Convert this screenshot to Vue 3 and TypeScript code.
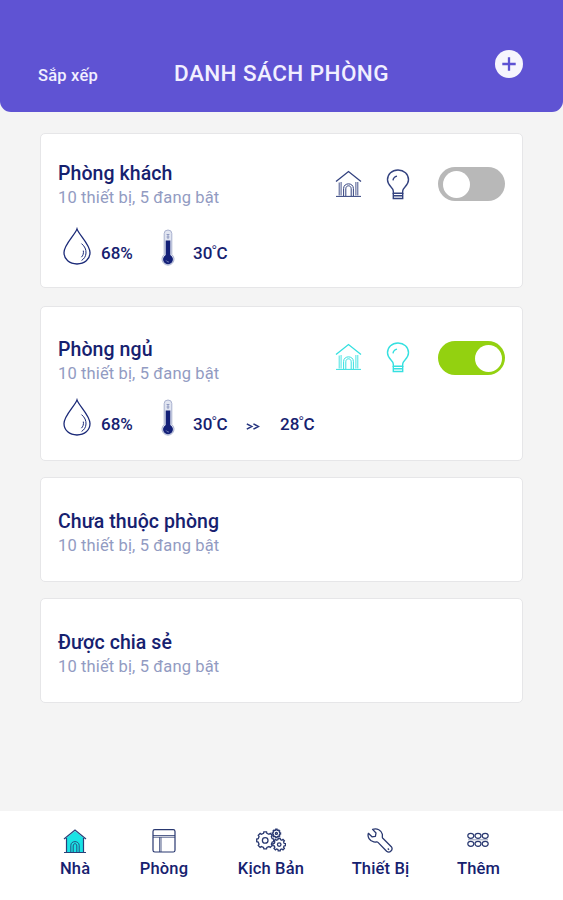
<script setup lang="ts">
interface Room {
  id: string
  name: string
  summary: string
  humidity?: string
  temperature?: string
  target?: string
  on?: boolean
}

interface Tab {
  id: string
  label: string
}

const rooms: Room[] = [
  { id: 'living', name: 'Phòng khách', summary: '10 thiết bị, 5 đang bật', humidity: '68%', temperature: '30', on: false },
  { id: 'bedroom', name: 'Phòng ngủ', summary: '10 thiết bị, 5 đang bật', humidity: '68%', temperature: '30', target: '28', on: true },
  { id: 'unassigned', name: 'Chưa thuộc phòng', summary: '10 thiết bị, 5 đang bật' },
  { id: 'shared', name: 'Được chia sẻ', summary: '10 thiết bị, 5 đang bật' },
]

const tabs: Tab[] = [
  { id: 'home', label: 'Nhà' },
  { id: 'rooms', label: 'Phòng' },
  { id: 'scenes', label: 'Kịch Bản' },
  { id: 'devices', label: 'Thiết Bị' },
  { id: 'more', label: 'Thêm' },
]

// Outline of a toothed wheel, alternating between the outer and root radius.
function gear(cx: number, cy: number, outer: number, root: number, teeth: number): string {
  const points: string[] = []
  const step = (Math.PI * 2) / teeth
  for (let i = 0; i < teeth; i++) {
    const a = i * step
    const corners: [number, number][] = [[-0.3, root], [-0.2, outer], [0.2, outer], [0.3, root]]
    for (const [t, r] of corners) {
      const angle = a + t * step
      points.push(`${(cx + r * Math.cos(angle)).toFixed(2)} ${(cy + r * Math.sin(angle)).toFixed(2)}`)
    }
  }
  return `M${points.join('L')}Z`
}

const gears: string[] = [gear(9.2, 11.4, 8.6, 7.2, 8), gear(23.2, 15.6, 6.4, 5.1, 8), gear(20.4, 4.4, 4.2, 3.3, 8)]
</script>

<template>
  <div class="screen">
    <header class="header">
      <span class="sort">Sắp xếp</span>
      <h1 class="title">DANH SÁCH PHÒNG</h1>
      <button class="add" aria-label="Thêm phòng">
        <svg width="28" height="28" viewBox="0 0 28 28">
          <circle cx="14" cy="14" r="14" fill="#f6f5fd" />
          <path d="M14 7.3v13.4M7.3 14h13.4" stroke="#5d52d3" stroke-width="2.3" />
        </svg>
      </button>
    </header>

    <main class="list">
      <section v-for="room in rooms" :key="room.id" class="card" :class="room.id">
        <div class="info">
          <h2 class="name">{{ room.name }}</h2>
          <p class="summary">{{ room.summary }}</p>
          <div v-if="room.humidity" class="stats">
            <svg class="drop" width="28" height="38" viewBox="0 0 28 38" fill="none" stroke="#1b2a78" stroke-width="1.3">
              <path d="M14 1.9C12 8 1 17.5 1 25.6C1 32.4 6.5 37 14 37S27 32.4 27 25.6C27 17.5 16 8 14 1.9Z" />
              <path d="M18.5 16.6C21.8 19.4 23.2 22.4 23 26C22.8 29.4 21.2 31.8 18.6 33.4M20.3 23.6C20.8 26.4 20 28.6 18.4 30.2" stroke-width="1" />
            </svg>
            <span class="value humidity">{{ room.humidity }}</span>
            <svg class="thermo" width="14" height="37" viewBox="0 0 14 37">
              <path d="M3.2 25.5V4.5Q3.2 1 7 1T10.8 4.5V25.5A6 6 0 1 1 3.2 25.5Z" fill="#e1e5f1" stroke="#a9b1cf" stroke-width="1" />
              <path d="M7 5v5M5.6 5.5h2.8M5.6 8h2.8" stroke="#8e98bf" stroke-width="1" />
              <path d="M4.7 11.5H9.3V26A4.9 4.9 0 1 1 4.7 26Z" fill="#132078" />
              <path d="M5.2 31.5Q6 33 7.8 33" fill="none" stroke="#8d98cb" stroke-width=".9" />
            </svg>
            <span class="value temp">{{ room.temperature }}<span class="deg">°</span>C</span>
            <template v-if="room.target">
              <svg class="arrows" width="14" height="7" viewBox="0 0 14 7" fill="none" stroke="#26357f" stroke-width="1.5">
                <path d="M.8 .8L5.8 3.5L.8 6.2M7.4 .8L12.4 3.5L7.4 6.2" />
              </svg>
              <span class="value target">{{ room.target }}<span class="deg">°</span>C</span>
            </template>
          </div>
        </div>

        <div v-if="room.humidity" class="controls" :class="{ on: room.on }">
          <svg class="house" width="27" height="28" viewBox="0 0 27 28" fill="none" stroke="currentColor" stroke-width="1.3">
            <path d="M1 11.6L13.5 1.5L26 11.6" />
            <path d="M4.2 12.5V25.5M6.1 12V25.5M20.9 12V25.5M22.8 12V25.5" stroke-width=".9" />
            <path d="M1 26.4H26M8.6 26V18.5C8.6 12.3 18.4 12.3 18.4 18.5V26M10.8 26V18.8C10.8 14.8 16.2 14.8 16.2 18.8V26" stroke-width="1" />
          </svg>
          <svg class="bulb" width="24" height="31" viewBox="0 0 24 31" fill="none" stroke="currentColor" stroke-width="1.4">
            <path d="M7.3 24.2V22C7.3 18.5 1.5 17 1.5 10.8C1.5 5 6 1 12 1S22.5 5 22.5 10.8C22.5 17 16.7 18.5 16.7 22V24.2Z" />
            <path d="M7.3 24V29.5H16.7V24M7.3 26.8H16.7" />
            <path d="M7 11.4C7.3 9 8.6 7.6 11 7.1" />
          </svg>
          <span class="toggle"><span class="knob"></span></span>
        </div>
      </section>
    </main>

    <nav class="tabs">
      <a v-for="tab in tabs" :key="tab.id" class="tab" :class="`tab-${tab.id}`">
        <svg v-if="tab.id === 'home'" class="icon" width="24" height="26" viewBox="0 0 24 26" fill="none" stroke="#284078" stroke-width="1.2">
          <path d="M3.2 10L12 3L20.8 10V24H3.2Z" fill="#19e3e5" stroke="none" />
          <path d="M1 11L12 2L23 11M3.5 10V24M20.5 10V24M1 24.5H23" />
          <path d="M7.8 24V17.5C7.8 12.3 16.2 12.3 16.2 17.5V24M10.2 24V18C10.2 14.9 13.8 14.9 13.8 18V24" stroke-width=".9" />
        </svg>
        <svg v-else-if="tab.id === 'rooms'" class="icon" width="24" height="26" viewBox="0 0 24 26" fill="none" stroke="#293870" stroke-width="1.2">
          <rect x="1" y="1.6" width="22" height="22.4" rx="1.8" />
          <path d="M1 7.5H23M1 9.2H23M7.6 9.2V24M9 9.2V24" stroke-width=".8" />
        </svg>
        <svg v-else-if="tab.id === 'scenes'" class="icon" width="30" height="26" viewBox="0 0 30 26" fill="none" stroke="#293870" stroke-width="1.3">
          <g transform="translate(0 1)">
            <path v-for="(d, i) in gears" :key="i" :d="d" />
            <circle cx="9.2" cy="11.4" r="2.8" />
            <circle cx="23.2" cy="15.6" r="1.8" />
            <circle cx="20.4" cy="4.4" r="1" />
          </g>
        </svg>
        <svg v-else-if="tab.id === 'devices'" class="icon" width="26" height="26" viewBox="0 0 26 26" fill="none" stroke="#293870" stroke-width="1.3" stroke-linejoin="round">
          <path d="M5.6 1.4C10 -.1 14.5 2.2 15.3 6.2C15.6 8 15 9.2 15.6 10L24.3 18.7C26.6 21.8 22.6 25.8 19.6 23.2L11 14.4C10 13.4 9 14.4 6.8 13.9C2.6 13 .1 9 1.4 5.3L5 8.8L8.4 8.3L9 5Z" />
          <path d="M20.8 20.5l1.2 1.2" />
        </svg>
        <svg v-else class="icon" width="22" height="26" viewBox="0 0 22 26" fill="none" stroke="#293870" stroke-width="1.2">
          <g v-for="y in [7.8, 15.8]" :key="y">
            <ellipse v-for="x in [3.8, 11, 18.2]" :key="x" :cx="x" :cy="y" rx="3" ry="2.5" />
          </g>
          <path d="M1 11.8H21" stroke-width=".8" opacity=".6" />
        </svg>
        <span class="label">{{ tab.label }}</span>
      </a>
    </nav>
  </div>
</template>

<style>
body {
  background: #fcfcfd;
}
</style>

<style scoped>
.screen {
  display: flex;
  flex-direction: column;
  width: 563px;
  height: 900px;
  overflow: hidden;
  background: #f4f4f4;
  font-family: Roboto, 'Liberation Sans', sans-serif;
  color: #16216f;
}

h1,
h2,
p {
  margin: 0;
}

.header {
  display: flex;
  align-items: flex-start;
  box-sizing: border-box;
  height: 112px;
  padding: 50px 40px 0 38px;
  border-radius: 0 0 11px 11px;
  background: #5f53d3;
  color: #f1efff;
}

.sort {
  width: 136px;
  padding-top: 13px;
  font-size: 16.5px;
  font-weight: 500;
  line-height: 26px;
  letter-spacing: 0.2px;
}

.title {
  flex: 1;
  padding-top: 9px;
  font-size: 22.5px;
  font-weight: 500;
  line-height: 28px;
  letter-spacing: 0.42px;
  white-space: nowrap;
}

.add {
  width: 28px;
  height: 28px;
  padding: 0;
  border: 0;
  background: none;
}

.add svg {
  display: block;
}

.list {
  flex: 1;
  padding: 21px 40px 0;
}

.card {
  display: flex;
  justify-content: space-between;
  box-sizing: border-box;
  height: 155px;
  margin-bottom: 18px;
  padding: 28px 17px 0;
  border: 1px solid #e6e6e8;
  border-radius: 5px;
  background: #fff;
}

.bedroom {
  margin-bottom: 16px;
  padding-top: 31px;
}

.unassigned,
.shared {
  height: 105px;
  margin-bottom: 16px;
  padding-top: 32px;
}

.name {
  font-size: 19.5px;
  font-weight: 500;
  line-height: 24px;
  letter-spacing: 0.08px;
}

.summary {
  font-size: 16.5px;
  line-height: 24px;
  letter-spacing: 0.13px;
  color: #929bc2;
}

.stats {
  display: flex;
  align-items: flex-start;
  margin-top: 17px;
  padding-left: 5px;
}

.bedroom .stats {
  margin-top: 12px;
}

.value {
  padding-top: 13px;
  font-size: 17px;
  font-weight: 500;
  line-height: 26px;
  white-space: nowrap;
}

.humidity {
  width: 60px;
  margin-left: 10px;
}

.thermo {
  margin-top: 2px;
}

.bedroom .thermo {
  margin-top: 1px;
}

.temp {
  width: 35px;
  margin-left: 18px;
}

.deg {
  margin: 0 -1px;
  font-size: 16px;
  font-weight: 300;
  line-height: 1;
  vertical-align: 2px;
}

.arrows {
  margin: 25px 20px 0 18px;
}

.controls {
  display: flex;
  align-items: flex-start;
  margin-top: -1px;
  color: #33427f;
}

.controls.on {
  color: #35e0e0;
}

.house {
  margin-top: 9px;
}

.bulb {
  margin: 8px 28px 0 24px;
}

.toggle {
  box-sizing: border-box;
  width: 67px;
  height: 34px;
  margin-top: 6px;
  padding: 3.5px 4.5px;
  border-radius: 17px;
  background: #b8b8b8;
}

.bedroom .controls {
  margin-top: -3px;
}

.bedroom .house {
  margin-top: 8px;
}

.bedroom .bulb {
  margin-top: 7px;
}

.knob {
  display: block;
  width: 27px;
  height: 27px;
  border-radius: 50%;
  background: #fff;
}

.on .toggle {
  padding: 3.5px 3px;
  background: #93d110;
}

.on .knob {
  margin-left: auto;
}

.tabs {
  display: flex;
  align-items: flex-start;
  justify-content: space-between;
  box-sizing: border-box;
  height: 89px;
  padding: 17px 63px 0 60px;
  background: #fff;
}

.tab {
  display: flex;
  flex-direction: column;
  align-items: center;
}

.tab-rooms,
.tab-scenes {
  padding-left: 2px;
}

.icon {
  display: block;
}

.label {
  margin-top: 2px;
  font-size: 16.5px;
  font-weight: 500;
  line-height: 26px;
  letter-spacing: 0.15px;
}
</style>
